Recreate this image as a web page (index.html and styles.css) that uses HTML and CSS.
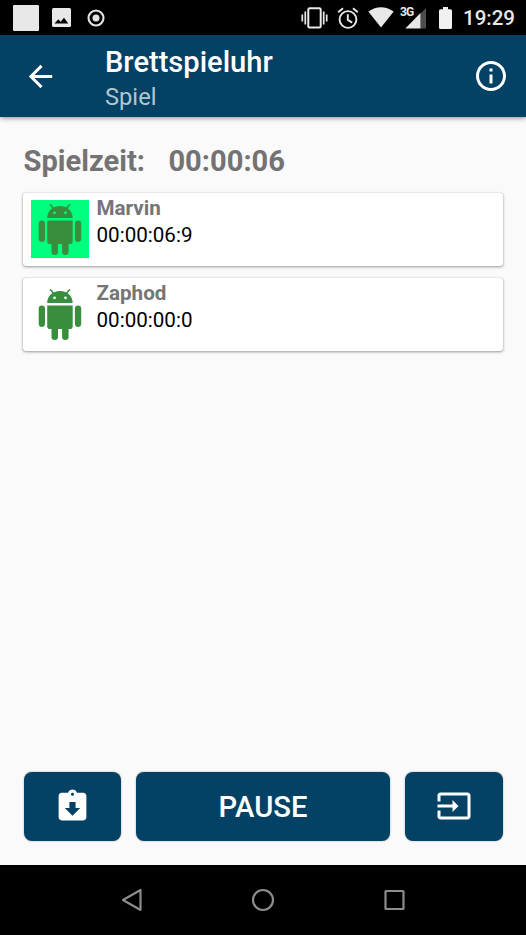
FILE: index.html
```html
<!DOCTYPE html>
<html lang="de">
<head>
<meta charset="utf-8">
<title>Brettspieluhr</title>
<link rel="stylesheet" href="styles.css">
</head>
<body>
<div class="screen">
  <div class="status">
    <div class="notifications">
      <span class="block"></span>
      <svg width="19" height="19" viewBox="0 0 19 19"><path fill="#e8e8e8" fill-rule="evenodd" d="M1.5 0h16A1.5 1.5 0 0 1 19 1.500v16a1.500 1.500 0 0 1-1.500 1.500h-16A1.500 1.500 0 0 1 0 17.500v-16A1.500 1.500 0 0 1 1.500 0zM2.500 15.500h13.800l-4.300-5.800-3.400 4-2.300-2.500z"/></svg>
      <svg width="18" height="18" viewBox="0 0 18 18"><circle cx="9" cy="9" r="7.500" fill="none" stroke="#e4e4e4" stroke-width="2.100"/><circle cx="9" cy="9" r="3.500" fill="#e4e4e4"/></svg>
    </div>
    <div class="system">
      <svg class="vibrate" width="27" height="22" viewBox="0 0 27 22" fill="none" stroke="#e8e8e8"><rect x="7.300" y="1.200" width="12.400" height="19.400" rx="1.500" stroke-width="2"/><path stroke-width="1.700" d="M4.300 4.500v13M1.300 7.500v7M22.700 4.500v13M25.700 7.500v7"/></svg>
      <svg class="alarm" width="22" height="22" viewBox="0 0 22 22" fill="none" stroke="#e8e8e8" stroke-width="1.900"><circle cx="11" cy="12.500" r="8.400"/><path d="M1.200 5.300 6 1.300M20.800 5.300 16 1.300M10.800 7.300v5.600l4.400 2.700"/></svg>
      <svg class="wifi" width="26" height="21" viewBox="0 0 26 21"><path fill="#e8e8e8" d="M13 20.500.3 4.500Q13-4 25.700 4.500z"/></svg>
      <div class="signal">
        <span class="net">3G</span>
        <svg width="26" height="21" viewBox="0 0 26 21"><path fill="#4d4d4d" d="M20.500 5.700 26 0v20.500h-5.500z"/><path fill="#e8e8e8" d="M20.500 5v15.500H5.300z"/></svg>
      </div>
      <svg class="battery" width="13" height="22" viewBox="0 0 13 22"><path fill="#f0f0f0" d="M4 0h5v2.300h2.500q1.500 0 1.500 1.500v16.700q0 1.500-1.500 1.500h-10Q0 22 0 20.500V3.800q0-1.500 1.500-1.500H4z"/></svg>
      <span class="clock">19:29</span>
    </div>
  </div>

  <header class="appbar">
    <svg class="back" width="35" height="35" viewBox="0 0 24 24"><path fill="#fff" d="M20 11H7.830l5.590-5.590L12 4l-8 8 8 8 1.410-1.410L7.830 13H20z"/></svg>
    <div class="titles">
      <h1 class="title">Brettspieluhr</h1>
      <div class="subtitle">Spiel</div>
    </div>
    <svg class="info" width="36" height="36" viewBox="0 0 24 24"><path fill="#fff" d="M11 17h2v-6h-2zm1-15C6.480 2 2 6.480 2 12s4.480 10 10 10 10-4.480 10-10S17.520 2 12 2zm0 18c-4.410 0-8-3.590-8-8s3.590-8 8-8 8 3.590 8 8-3.590 8-8 8zM11 9h2V7h-2z"/></svg>
  </header>

  <main class="content">
    <div class="total"><span>Spielzeit:</span><span>00:00:06</span></div>
    <div class="players">
      <div class="card">
        <svg class="avatar active" viewBox="0 0 58 58"><use href="#robot"/></svg>
        <div class="player"><div class="name">Marvin</div><div class="time">00:00:06:9</div></div>
      </div>
      <div class="card">
        <svg class="avatar" viewBox="0 0 58 58">
          <g id="robot" fill="#388e3c">
            <path fill-rule="evenodd" d="M16.200 18C16.200 11 21.500 6 29 6s12.700 5 12.700 12zM23.500 11.400a1.400 1.400 0 1 0 0 2.800 1.400 1.400 0 0 0 0-2.800zM34.500 11.400a1.400 1.400 0 1 0 0 2.800 1.400 1.400 0 0 0 0-2.800z"/>
            <path fill="none" stroke="#388e3c" stroke-width="1.500" stroke-linecap="round" d="m19.500 4.700 3.300 4M38.500 4.700l-3.300 4"/>
            <path d="M16.200 20.500h25.500v20.700q0 2.800-2.800 2.800H19q-2.800 0-2.800-2.800z"/>
            <rect x="7.700" y="20.500" width="6.300" height="21.500" rx="3.150"/>
            <rect x="43.900" y="20.500" width="6.300" height="21.500" rx="3.150"/>
            <path d="M20.500 42h6.500v9.800a3.250 3.250 0 0 1-6.500 0zM31.100 42h6.500v9.800a3.250 3.250 0 0 1-6.500 0z"/>
          </g>
        </svg>
        <div class="player"><div class="name">Zaphod</div><div class="time">00:00:00:0</div></div>
      </div>
    </div>
    <div class="actions">
      <button class="btn"><svg width="37" height="37" viewBox="0 0 24 24"><path fill="#fff" d="M19 3h-4.180C14.400 1.840 13.300 1 12 1c-1.300 0-2.400.84-2.820 2H5c-1.100 0-2 .9-2 2v14c0 1.100.9 2 2 2h14c1.100 0 2-.9 2-2V5c0-1.100-.9-2-2-2zm-7 0c.55 0 1 .45 1 1s-.45 1-1 1-1-.45-1-1 .45-1 1-1zm0 15l-5-5h3V9h4v4h3z"/></svg></button>
      <button class="btn"><span class="label">PAUSE</span></button>
      <button class="btn"><svg width="36" height="36" viewBox="0 0 24 24"><path fill="#fff" d="M21 3.010H3c-1.100 0-2 .9-2 2V9h2V4.990h18v14.030H3V15H1v4.010c0 1.100.9 1.980 2 1.980h18c1.100 0 2-.88 2-1.980v-14c0-1.110-.9-2-2-2zM11 16l4-4-4-4v3H1v2h10z"/></svg></button>
    </div>
  </main>

  <nav class="navbar">
    <svg width="22" height="24" viewBox="0 0 22 24"><path d="M3 12 20.500 2v20z"/></svg>
    <svg width="24" height="24" viewBox="0 0 24 24"><circle cx="12" cy="12" r="10"/></svg>
    <svg width="22" height="24" viewBox="0 0 22 24"><rect x="1.500" y="3" width="18" height="18" rx=".5"/></svg>
  </nav>
</div>
</body>
</html>
```

FILE: styles.css
```css
* { box-sizing: border-box; }
body { margin: 0; font-family: Roboto, sans-serif; background: #fafafa; }
svg { display: block; flex: none; }
.screen { width: 526px; height: 935px; display: flex; flex-direction: column; overflow: hidden; }

.status { height: 35px; flex: none; background: #000; display: flex; justify-content: space-between; padding: 0 12px 0 13px; }
.notifications { display: flex; align-items: center; }
.block { width: 26px; height: 26px; background: #e8e8e8; border-radius: 1px; margin-right: 13px; }
.notifications svg + svg { margin-left: 16px; }
.system { display: flex; align-items: center; }
.alarm { margin-left: 9px; }
.wifi { margin-left: 9px; }
.signal { position: relative; margin-left: 6px; }
.signal svg { margin-top: 1px; }
.net { position: absolute; left: 0; top: -1px; font-size: 12px; line-height: 12px; font-weight: 700; color: #e8e8e8; letter-spacing: -.8px; }
.battery { margin-left: 13px; }
.clock { width: 51px; margin: 1px 0 0 11px; font-size: 20.500px; line-height: 24px; font-weight: 500; color: #e8e8e8; white-space: nowrap; }

.appbar { position: relative; height: 82px; flex: none; background: #034264; display: flex; align-items: center; padding: 0 17px 0 23px; box-shadow: 0 1px 5px rgba(0, 0, 0, .45); color: #fff; }
.titles { margin: 4px 0 0 47px; flex: 1; }
.title { margin: 0; font-size: 29.100px; line-height: 35px; font-weight: 500; }
.subtitle { font-size: 23.700px; line-height: 28px; margin-top: 3px; color: #b3c6d0; }

.content { flex: 1; display: flex; flex-direction: column; padding: 27px 23px 24px; }
.total { display: flex; gap: 23.500px; padding-left: .5px; font-size: 29.100px; line-height: 35px; font-weight: 700; color: #737373; }
.players { display: flex; flex-direction: column; gap: 11.700px; margin-top: 13.700px; }
.card { height: 73.300px; display: flex; background: #fff; border-radius: 3px; padding: 7.500px; box-shadow: 0 1px 3px rgba(0, 0, 0, .38), 0 0 1px rgba(0, 0, 0, .25); }
.avatar { width: 58px; height: 58px; }
.card .active { margin-top: -.5px; background: #00ff7f; }
.player { margin-left: 8px; font-size: 20.600px; line-height: 24px; }
.name { font-weight: 700; color: #757575; margin-top: -4.500px; }
.time { color: #000; margin-top: 3.500px; }

.actions { margin: auto .5px 0; display: grid; grid-template-columns: 97.500px 254px 97.500px; justify-content: space-between; height: 69.500px; }
.btn { display: flex; align-items: center; justify-content: center; border: 0; border-radius: 8px; padding: 0; background: #034264; color: #fff; font: 500 29.200px/35px Roboto, sans-serif; box-shadow: 0 0 2px rgba(0, 0, 0, .35); }
.label { padding-top: 2px; }

.navbar { height: 70px; flex: none; background: #000; display: flex; align-items: center; justify-content: space-between; padding: 0 120px; }
.navbar svg { fill: none; stroke: #8c8c8c; stroke-width: 2.200; stroke-linejoin: round; }
```
